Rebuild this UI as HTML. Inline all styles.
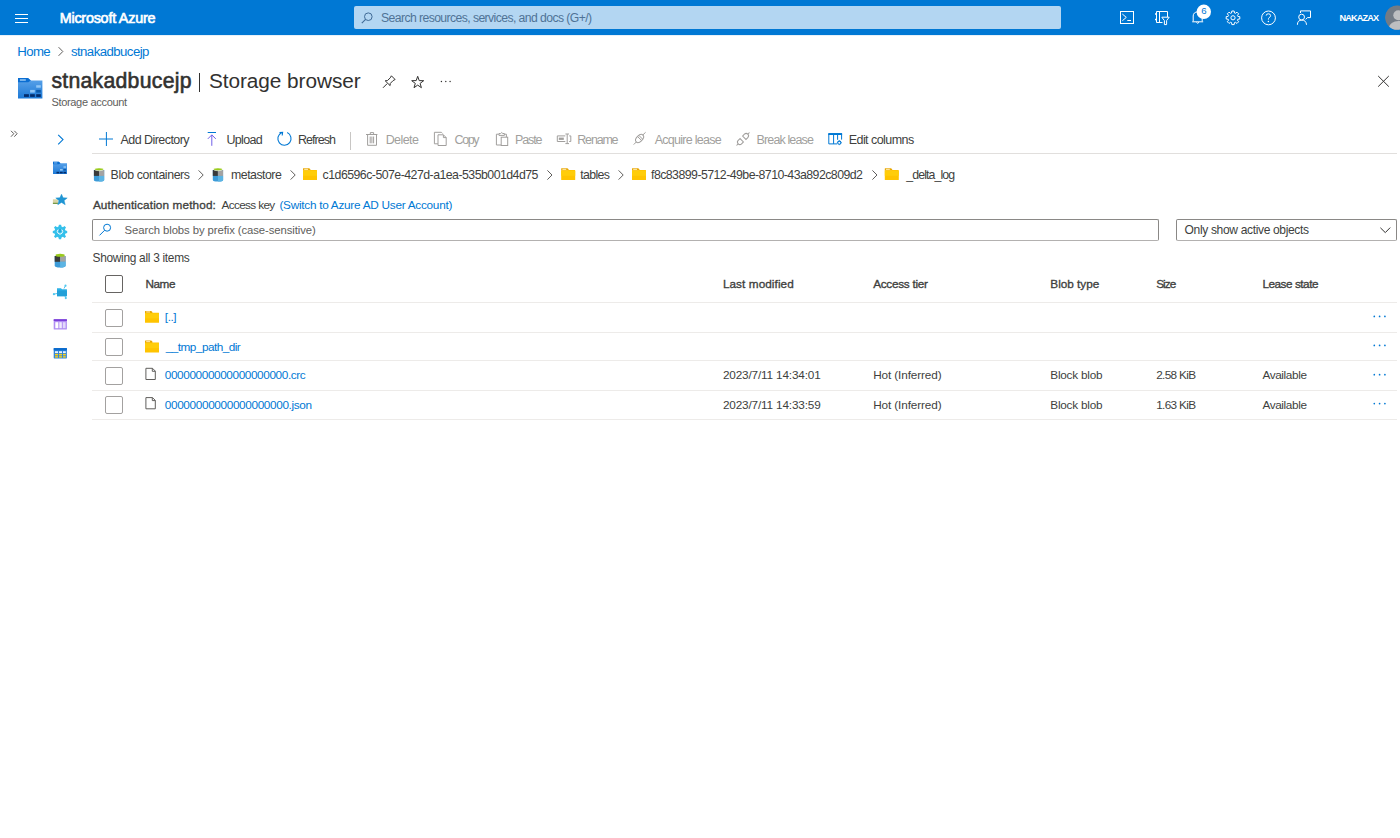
<!DOCTYPE html>
<html><head><meta charset="utf-8">
<style>
*{margin:0;padding:0;box-sizing:border-box}
html,body{width:1400px;height:838px;overflow:hidden;background:#fff;font-family:"Liberation Sans",sans-serif;position:relative}
.t{position:absolute;white-space:nowrap;line-height:1em}
.a{position:absolute}
svg{position:absolute;overflow:visible}
</style></head><body>
<!-- top bar -->
<div class="a" style="left:0;top:0;width:1400px;height:35px;background:#0078d4"></div>
<div class="a" style="left:354px;top:6px;width:707px;height:23px;background:#b3d6f2;border-radius:2px"></div>
<!-- hamburger -->
<div class="a" style="left:15px;top:13.5px;width:13px;height:1px;background:#fff"></div>
<div class="a" style="left:15px;top:17.5px;width:13px;height:1px;background:#fff"></div>
<div class="a" style="left:15px;top:21.5px;width:13px;height:1px;background:#fff"></div>
<!-- search icon -->
<svg style="left:361px;top:12px" width="12" height="12" viewBox="0 0 12 12"><circle cx="7.3" cy="4.7" r="3.8" fill="none" stroke="#3f6a96" stroke-width="1"/><path d="M4.6 7.4 L0.8 11.2" stroke="#3f6a96" stroke-width="1.1"/></svg>

<!-- ===== top bar icons ===== -->
<svg style="left:0;top:0" width="1400" height="35" viewBox="0 0 1400 35">
 <g fill="none" stroke="#fff" stroke-width="1">
  <!-- cloud shell -->
  <rect x="1120.5" y="11.5" width="13" height="12"/>
  <path d="M1122.3 14 L1126.3 17.4 L1122.3 20.8"/>
  <path d="M1127.3 20.5 H1131"/>
  <!-- directory + filter -->
  <path d="M1162.5 22.5 H1156.5 V11.5 H1167.5 V17"/>
  <path d="M1159.5 11.5 V22.5"/>
  <path d="M1155 14 H1157 M1155 19.5 H1157" stroke-width="1.3"/>
  <path d="M1161.8 17.2 H1169.2 L1166.6 20.6 V24.6 H1164.4 V20.6 Z"/>
  <!-- bell -->
  <path d="M1193.2 21.3 V16 Q1193.2 12.2 1197.8 11.8 Q1202 12.2 1202.2 16 V21.3"/>
  <path d="M1192.2 21.8 H1203.2"/>
  <path d="M1196.4 22.3 Q1197.7 24.3 1199 22.3"/>
  <!-- gear -->
  <circle cx="1233" cy="17.8" r="2.1"/>
  <!-- help -->
  <circle cx="1268.5" cy="17.9" r="6.9"/>
  <path d="M1266.2 15.6 Q1266.2 13.8 1268.4 13.8 Q1270.6 13.8 1270.6 15.6 Q1270.6 16.9 1269.2 17.6 Q1268.4 18.1 1268.4 19.6"/>
  <!-- feedback -->
  <path d="M1300.5 13 V10.9 H1310.5 V17.6 H1307.5 L1305.6 19.4"/>
  <circle cx="1301.6" cy="17.1" r="2.9"/>
  <path d="M1297.4 24.8 Q1297.4 20.1 1301.8 20.1 Q1306.2 20.1 1306.5 24.8"/>
 </g>
 <!-- gear teeth -->
 <path fill="none" stroke="#fff" stroke-width="1" stroke-linejoin="round" d="M1231.52 13.02 L1231.83 11.00 L1234.17 11.00 L1234.48 13.02 L1235.33 13.38 L1236.98 12.17 L1238.63 13.82 L1237.42 15.47 L1237.78 16.32 L1239.80 16.63 L1239.80 18.97 L1237.78 19.28 L1237.42 20.13 L1238.63 21.78 L1236.98 23.43 L1235.33 22.22 L1234.48 22.58 L1234.17 24.60 L1231.83 24.60 L1231.52 22.58 L1230.67 22.22 L1229.02 23.43 L1227.37 21.78 L1228.58 20.13 L1228.22 19.28 L1226.20 18.97 L1226.20 16.63 L1228.22 16.32 L1228.58 15.47 L1227.37 13.82 L1229.02 12.17 L1230.67 13.38 Z"/>
 <circle cx="1268.4" cy="21.4" r="0.75" fill="#fff"/>
 <!-- badge -->
 <circle cx="1203.8" cy="11.8" r="7.2" fill="#fff"/>
 <text x="1204" y="13.9" font-family="Liberation Sans" font-size="9.6" fill="#0078d4" text-anchor="middle">6</text>
 <!-- avatar -->
 <clipPath id="avc"><circle cx="1397.3" cy="17.45" r="12.3"/></clipPath>
 <g clip-path="url(#avc)">
 <circle cx="1397.3" cy="17.45" r="12.3" fill="#737b85"/>
 <circle cx="1398.3" cy="15.3" r="5" fill="#bebfc1"/>
 <ellipse cx="1398.5" cy="27.5" rx="9.5" ry="6.5" fill="#bebfc1"/>
 </g>
</svg>
<div class="a" style="left:0;top:35px;width:1400px;height:1px;background:#e6f0f9"></div>


<!-- ===== header area ===== -->
<svg style="left:0;top:36px" width="1400" height="80" viewBox="0 36 1400 80">
 <!-- breadcrumb chevron -->
 <path d="M58.6 47.2 L62.8 51.5 L58.6 55.8" fill="none" stroke="#605e5c" stroke-width="1"/>
 <!-- storage account icon -->
 <defs><linearGradient id="sg" x1="0" y1="0" x2="0" y2="1"><stop offset="0" stop-color="#5ea5ea"/><stop offset="1" stop-color="#1b78d6"/></linearGradient></defs>
 <path d="M18 78 H28 L30.8 80.4 H42.4 V98.6 H18 Z" fill="url(#sg)"/>
 <path d="M18 78 H28 L30.8 80.4 L28.3 82.3 H18 Z" fill="#0b6ed2"/>
 <rect x="19.9" y="79.2" width="5.9" height="1.6" fill="#8fc4f3"/>
 <rect x="36.2" y="85.2" width="4.6" height="2.5" fill="#91c6f6"/>
 <rect x="30.1" y="89.9" width="4.7" height="2.7" fill="#91c6f6"/>
 <rect x="36.2" y="89.9" width="4.6" height="2.7" fill="#0c5aab"/>
 <rect x="24" y="94.2" width="4.9" height="2.7" fill="#032c6b"/>
 <rect x="30.1" y="94.2" width="4.7" height="2.7" fill="#032c6b"/>
 <rect x="36.2" y="94.2" width="4.6" height="2.7" fill="#032c6b"/>
 <!-- pin -->
 <g fill="none" stroke="#323130" stroke-width="1" stroke-linejoin="round">
  <path d="M383 87.8 L387.2 83.6"/>
  <path d="M385.2 80.8 L387.4 80.6 L390.3 77.8 L391.4 75.8 L395.1 79.5 L393.1 80.6 L390.3 83.4 L390.1 85.6 Z"/>
  <!-- star -->
  <path d="M417.7 76.3 L419.2 80.6 L423.7 80.7 L420.1 83.4 L421.4 87.7 L417.7 85.1 L414 87.7 L415.3 83.4 L411.7 80.7 L416.2 80.6 Z"/>
  <!-- close -->
  <path d="M1378.2 76 L1388.8 86.6 M1388.8 76 L1378.2 86.6"/>
 </g>
 <g fill="#323130">
  <circle cx="441.4" cy="81.5" r="0.7"/><circle cx="445.8" cy="81.5" r="0.7"/><circle cx="450.1" cy="81.5" r="0.7"/>
 </g>
</svg>
<div class="a" style="left:199px;top:73px;width:1.4px;height:19px;background:#323130"></div>


<!-- ===== sidebar ===== -->
<svg style="left:0;top:120px" width="90" height="250" viewBox="0 120 90 250">
 <g fill="none" stroke="#605e5c" stroke-width="1">
  <path d="M11 130.8 L13.8 133.7 L11 136.7 M14.3 130.8 L17.1 133.7 L14.3 136.7"/>
 </g>
 <path d="M58.2 134.9 L63 139.6 L58.2 144.4" fill="none" stroke="#0078d4" stroke-width="1.1"/>
 <!-- storage icon small -->
 <defs><linearGradient id="sg2" x1="0" y1="0" x2="0" y2="1"><stop offset="0" stop-color="#5ea5ea"/><stop offset="1" stop-color="#1b78d6"/></linearGradient></defs>
 <path d="M53 161.8 H58.8 L60.5 163.2 H67 V174.1 H53 Z" fill="url(#sg2)"/>
 <path d="M53 161.8 H58.8 L60.5 163.2 L59 164.3 H53 Z" fill="#0b6ed2"/>
 <rect x="54" y="162.5" width="3.3" height="0.9" fill="#8fc4f3"/>
 <rect x="63.5" y="166.3" width="2.6" height="1.5" fill="#91c6f6"/>
 <rect x="60" y="169" width="2.7" height="1.6" fill="#91c6f6"/>
 <rect x="63.5" y="169" width="2.6" height="1.6" fill="#0c5aab"/>
 <rect x="56.5" y="171.8" width="2.8" height="1.6" fill="#032c6b"/>
 <rect x="60" y="171.8" width="2.7" height="1.6" fill="#032c6b"/>
 <rect x="63.5" y="171.8" width="2.6" height="1.6" fill="#032c6b"/>
 <!-- drawer + star -->
 <rect x="52.9" y="199.3" width="5" height="4.5" fill="#d9d4a6"/>
 <rect x="52.9" y="202.8" width="5" height="1" fill="#5d8b2f"/>
 <path d="M61.5 194.2 L63.1 197.8 L67.2 198 L64.1 200.6 L65.2 204.7 L61.5 202.4 L57.8 204.7 L58.9 200.6 L55.8 198 L59.9 197.8 Z" fill="#1f95d3" stroke="#1f95d3" stroke-width="0.5" stroke-linejoin="round"/>
 <!-- gear cyan -->
 <path fill="#34c0eb" d="M58.9 224.7 H61.1 L61.5 226.6 L62.9 227.2 L64.5 226.1 L66 227.6 L64.9 229.2 L65.5 230.6 L67.2 231 V233 L65.5 233.4 L64.9 234.8 L66 236.4 L64.5 237.9 L62.9 236.8 L61.5 237.4 L61.1 239.2 H58.9 L58.5 237.4 L57.1 236.8 L55.5 237.9 L54 236.4 L55.1 234.8 L54.5 233.4 L52.8 233 V231 L54.5 230.6 L55.1 229.2 L54 227.6 L55.5 226.1 L57.1 227.2 L58.5 226.6 Z"/>
 <path d="M61.8 229.6 A2.6 2.6 0 1 1 58.2 229.6" fill="none" stroke="#fff" stroke-width="1"/>
 <path d="M60 229 V232" stroke="#1e90c8" stroke-width="1"/>
 <!-- container -->
 <path d="M54.7 256 H65.6 V265.6 Q65.6 267.6 60.15 267.6 Q54.7 267.6 54.7 265.6 Z" fill="#3c9bd8"/>
 <rect x="54.7" y="256" width="5.4" height="5.8" fill="#3a3a3a"/>
 <rect x="60.1" y="256" width="5.5" height="5.8" fill="#a3a3a3"/>
 <path d="M60.1 261.8 H65.6 V265.6 Q65.6 267.6 60.15 267.6 Z" fill="#5cb4e3"/>
 <ellipse cx="60.15" cy="255.2" rx="4.6" ry="1.5" fill="#9acb1c"/>
 <!-- share/fileshare -->
 <path d="M57 288.3 H61 L62 289.2 H66.9 V296.2 H57 Z" fill="#2cb1e6"/>
 <rect x="57" y="290.5" width="9.9" height="5.7" fill="#22a0d8"/>
 <path d="M54 294.2 L57 293.5 M65.5 285.7 L64 288.5 M65.8 298.1 L65 296" stroke="#2cb1e6" stroke-width="0.8"/>
 <circle cx="53.9" cy="294.2" r="1.1" fill="#50c8f0"/>
 <circle cx="65.5" cy="285.7" r="1.1" fill="#50c8f0"/>
 <circle cx="65.8" cy="298.1" r="1.1" fill="#50c8f0"/>
 <!-- queue purple -->
 <rect x="53.7" y="319.2" width="13.2" height="10.3" rx="0.6" fill="#b08ef2"/>
 <rect x="53.7" y="319.2" width="13.2" height="1.8" fill="#7a3ed8"/>
 <rect x="55.3" y="322.2" width="3" height="6" fill="#fff"/>
 <rect x="59.3" y="322.2" width="2.5" height="6" fill="#f0ebfd"/>
 <rect x="62.8" y="322.2" width="2.8" height="6" fill="#e2d8fb"/>
 <!-- table -->
 <rect x="53.7" y="348.1" width="13.2" height="10.3" rx="0.6" fill="#2f86dc"/>
 <rect x="53.7" y="348.1" width="13.2" height="2.3" fill="#0a6bcc"/>
 <g fill="#ffffff"><rect x="55" y="351.3" width="3" height="1.6"/><rect x="59" y="351.3" width="3" height="1.6"/><rect x="63" y="351.3" width="2.8" height="1.6"/></g>
 <g fill="#fcd116"><rect x="55" y="353.8" width="3" height="1.6"/><rect x="59" y="353.8" width="3" height="1.6"/><rect x="63" y="353.8" width="2.8" height="1.6"/>
 <rect x="55" y="356.2" width="3" height="1.4"/><rect x="59" y="356.2" width="3" height="1.4"/><rect x="63" y="356.2" width="2.8" height="1.4"/></g>
</svg>


<!-- ===== toolbar icons ===== -->
<svg style="left:90px;top:125px" width="860" height="30" viewBox="90 125 860 30">
 <g fill="none" stroke-width="1">
  <!-- plus -->
  <path d="M106.4 132 V146 M99 139 H113" stroke="#0078d4"/>
  <!-- upload -->
  <path d="M207.7 132.5 H216" stroke="#0078d4"/>
  <path d="M211.8 134.8 V145.8 M207.8 138.9 L211.8 134.9 L215.8 138.9" stroke="#7160e8"/>
  <!-- refresh -->
  <path d="M287.2 132.6 A6.6 6.6 0 1 1 281.5 132.7" stroke="#0078d4" stroke-width="1.1"/>
  <path d="M279.5 132.6 L282.6 132.4 L282.2 135.5" stroke="#0078d4" stroke-width="1.1"/>
  <!-- trash -->
  <g stroke="#a19f9d">
   <path d="M366 134.5 H377.4"/>
   <path d="M370.3 134.5 V132.6 H373.6 V134.5"/>
   <path d="M367.6 134.5 V145.3 H376.5 V134.5"/>
   <path d="M370.2 136.5 V143.3 M371.9 136.5 V143.3 M373.6 136.5 V143.3"/>
  </g>
  <!-- copy -->
  <g stroke="#a19f9d">
   <path d="M437.9 143.8 H434.4 V132.3 H441.4 L442.6 133.5"/>
   <path d="M438 134.8 H443.4 L446.2 137.6 V145.5 H438 Z"/>
   <path d="M443.4 134.8 V137.6 H446.2"/>
  </g>
  <!-- paste -->
  <g stroke="#a19f9d">
   <path d="M501 145 H496.4 V134.2 H498.8"/>
   <path d="M504.6 134.2 H506.4 V137"/>
   <path d="M499 135.4 V133.5 H500.6 Q501.7 131.6 502.8 133.5 H504.4 V135.4 Z"/>
   <rect x="501.2" y="137.2" width="6.5" height="8.3"/>
  </g>
  <!-- rename -->
  <g stroke="#a19f9d">
   <path d="M565.3 135.9 H557.3 V141.5 H565.3"/>
   <path d="M569.2 135.9 H570.8 V141.5 H569.2"/>
   <path d="M567.2 134 V143.6 M565.4 134 H569 M565.4 143.6 H569"/>
  </g>
  <rect x="558.8" y="137.6" width="5" height="2.3" fill="#a19f9d"/>
  <!-- acquire lease -->
  <g stroke="#a19f9d">
   <path d="M633.7 144.6 L636.4 141.9 M642.8 135 L645.6 132.3"/>
   <ellipse cx="639.6" cy="138.5" rx="4.8" ry="2.9" transform="rotate(-45 639.6 138.5)"/>
   <path d="M637.6 136.6 L641.5 140.4 M638.9 135.4 L642.7 139.2"/>
  </g>
  <!-- break lease -->
  <g stroke="#a19f9d" transform="rotate(-45 743 139)">
   <path d="M733.8 139 H736.2"/>
   <path d="M741.2 136.6 H738.6 A2.4 2.4 0 0 0 738.6 141.4 H741.2 Z"/>
   <path d="M744.8 136.6 H747.4 A2.4 2.4 0 0 1 747.4 141.4 H744.8 Z"/>
   <path d="M749.8 139 H752.2"/>
  </g>
  <!-- edit columns -->
  <g stroke="#0078d4">
   <path d="M837 143.9 H828.8 V133.8 H841.6 V139.6"/>
   <path d="M833.6 135 V143.9 M837.6 135 V139.8"/>
  </g>
  <rect x="828.3" y="133.1" width="13.8" height="1.9" fill="#0078d4"/>
  <circle cx="839.3" cy="142.7" r="1.6" fill="#fff" stroke="#0078d4" stroke-width="1.1"/>
  <path d="M839.3 140.3 V140.9 M839.3 144.5 V145.1 M836.9 142.7 H837.5 M841.1 142.7 H841.7" stroke="#0078d4" stroke-width="1"/>
 </g>
</svg>

<svg style="left:85px;top:160px" width="900" height="30" viewBox="85 160 900 30">
<g transform="translate(93.9 167.9)">
  <path d="M0 2.2 H10.3 V12 Q10.3 13.7 5.15 13.7 Q0 13.7 0 12 Z" fill="#3c9bd8"/>
  <rect x="0" y="2.2" width="5.1" height="5.8" fill="#3a3a3a"/>
  <rect x="5.1" y="2.2" width="5.2" height="5.8" fill="#a3a3a3"/>
  <path d="M5.1 8 H10.3 V12 Q10.3 13.7 5.15 13.7 Z" fill="#5cb4e3"/>
  <ellipse cx="5.15" cy="1.4" rx="4.4" ry="1.4" fill="#9acb1c" stroke="#fff" stroke-width="0.6"/>
 </g>
<g transform="translate(212.8 167.9)">
  <path d="M0 2.2 H10.3 V12 Q10.3 13.7 5.15 13.7 Q0 13.7 0 12 Z" fill="#3c9bd8"/>
  <rect x="0" y="2.2" width="5.1" height="5.8" fill="#3a3a3a"/>
  <rect x="5.1" y="2.2" width="5.2" height="5.8" fill="#a3a3a3"/>
  <path d="M5.1 8 H10.3 V12 Q10.3 13.7 5.15 13.7 Z" fill="#5cb4e3"/>
  <ellipse cx="5.15" cy="1.4" rx="4.4" ry="1.4" fill="#9acb1c" stroke="#fff" stroke-width="0.6"/>
 </g>
<path d="M198.6 170.4 L203.2 175.0 L198.6 179.6" fill="none" stroke="#605e5c" stroke-width="1"/>
<path d="M290.6 170.4 L295.20000000000005 175.0 L290.6 179.6" fill="none" stroke="#605e5c" stroke-width="1"/>
<path d="M547.4 170.4 L552.0 175.0 L547.4 179.6" fill="none" stroke="#605e5c" stroke-width="1"/>
<path d="M618.6 170.4 L623.2 175.0 L618.6 179.6" fill="none" stroke="#605e5c" stroke-width="1"/>
<path d="M872.4 170.4 L877.0 175.0 L872.4 179.6" fill="none" stroke="#605e5c" stroke-width="1"/>
<g transform="translate(303 168.3)">
  <path d="M0 0.3 Q0 0 0.3 0 H6.2 L7.4 1 V2.3 H0 Z" fill="#e8a702"/>
  <path d="M0 2 H6.4 L7.5 1.8 H13.7 Q14 1.8 14 2.1 V11.5 Q14 11.8 13.7 11.8 H0.3 Q0 11.8 0 11.5 Z" fill="#ffc400"/>
  <rect x="0" y="2.6" width="14" height="4.9" fill="#ffcd0a"/>
  <rect x="1.2" y="0.5" width="3.8" height="1.1" fill="#fde7a8"/>
 </g>
<g transform="translate(561.2 168.3)">
  <path d="M0 0.3 Q0 0 0.3 0 H6.2 L7.4 1 V2.3 H0 Z" fill="#e8a702"/>
  <path d="M0 2 H6.4 L7.5 1.8 H13.7 Q14 1.8 14 2.1 V11.5 Q14 11.8 13.7 11.8 H0.3 Q0 11.8 0 11.5 Z" fill="#ffc400"/>
  <rect x="0" y="2.6" width="14" height="4.9" fill="#ffcd0a"/>
  <rect x="1.2" y="0.5" width="3.8" height="1.1" fill="#fde7a8"/>
 </g>
<g transform="translate(632 168.3)">
  <path d="M0 0.3 Q0 0 0.3 0 H6.2 L7.4 1 V2.3 H0 Z" fill="#e8a702"/>
  <path d="M0 2 H6.4 L7.5 1.8 H13.7 Q14 1.8 14 2.1 V11.5 Q14 11.8 13.7 11.8 H0.3 Q0 11.8 0 11.5 Z" fill="#ffc400"/>
  <rect x="0" y="2.6" width="14" height="4.9" fill="#ffcd0a"/>
  <rect x="1.2" y="0.5" width="3.8" height="1.1" fill="#fde7a8"/>
 </g>
<g transform="translate(884.8 168.3)">
  <path d="M0 0.3 Q0 0 0.3 0 H6.2 L7.4 1 V2.3 H0 Z" fill="#e8a702"/>
  <path d="M0 2 H6.4 L7.5 1.8 H13.7 Q14 1.8 14 2.1 V11.5 Q14 11.8 13.7 11.8 H0.3 Q0 11.8 0 11.5 Z" fill="#ffc400"/>
  <rect x="0" y="2.6" width="14" height="4.9" fill="#ffcd0a"/>
  <rect x="1.2" y="0.5" width="3.8" height="1.1" fill="#fde7a8"/>
 </g>
</svg>
<svg style="left:85px;top:215px" width="1315" height="210" viewBox="85 215 1315 210">
<circle cx="107.1" cy="227.7" r="3.5" fill="none" stroke="#0078d4" stroke-width="1"/>
<path d="M104.6 230.3 L99.5 235.4" stroke="#0078d4" stroke-width="1"/>
<path d="M1380.4 227.8 L1385.3 232.6 L1390.2 227.6" fill="none" stroke="#323130" stroke-width="1"/>
<g transform="translate(145 310.9)">
  <path d="M0 0.3 Q0 0 0.3 0 H6.2 L7.4 1 V2.3 H0 Z" fill="#e8a702"/>
  <path d="M0 2 H6.4 L7.5 1.8 H13.7 Q14 1.8 14 2.1 V11.6 Q14 11.9 13.7 11.9 H0.3 Q0 11.9 0 11.6 Z" fill="#ffc400"/>
  <rect x="0" y="2.6" width="14" height="4.95" fill="#ffcd0a"/>
  <rect x="1.2" y="0.5" width="3.8" height="1.1" fill="#fde7a8"/>
 </g>
<g transform="translate(145 340.6)">
  <path d="M0 0.3 Q0 0 0.3 0 H6.2 L7.4 1 V2.3 H0 Z" fill="#e8a702"/>
  <path d="M0 2 H6.4 L7.5 1.8 H13.7 Q14 1.8 14 2.1 V11.7 Q14 12 13.7 12 H0.3 Q0 12 0 11.7 Z" fill="#ffc400"/>
  <rect x="0" y="2.6" width="14" height="5.0" fill="#ffcd0a"/>
  <rect x="1.2" y="0.5" width="3.8" height="1.1" fill="#fde7a8"/>
 </g>
<path d="M145.9 368.3 H152.5 L155.3 371.1 V379.5 H145.9 Z" fill="#fff" stroke="#605e5c" stroke-width="1"/>
<path d="M152.3 368.3 V371.3 H155.3" fill="none" stroke="#605e5c" stroke-width="1"/>
<path d="M145.9 397.6 H152.5 L155.3 400.40000000000003 V408.8 H145.9 Z" fill="#fff" stroke="#605e5c" stroke-width="1"/>
<path d="M152.3 397.6 V400.6 H155.3" fill="none" stroke="#605e5c" stroke-width="1"/>
<circle cx="1374.3" cy="316.4" r="0.85" fill="#0078d4"/>
<circle cx="1379.6" cy="316.4" r="0.85" fill="#0078d4"/>
<circle cx="1384.9" cy="316.4" r="0.85" fill="#0078d4"/>
<circle cx="1374.3" cy="345.4" r="0.85" fill="#0078d4"/>
<circle cx="1379.6" cy="345.4" r="0.85" fill="#0078d4"/>
<circle cx="1384.9" cy="345.4" r="0.85" fill="#0078d4"/>
<circle cx="1374.3" cy="374.7" r="0.85" fill="#0078d4"/>
<circle cx="1379.6" cy="374.7" r="0.85" fill="#0078d4"/>
<circle cx="1384.9" cy="374.7" r="0.85" fill="#0078d4"/>
<circle cx="1374.3" cy="403.6" r="0.85" fill="#0078d4"/>
<circle cx="1379.6" cy="403.6" r="0.85" fill="#0078d4"/>
<circle cx="1384.9" cy="403.6" r="0.85" fill="#0078d4"/>
</svg>
<!-- table borders -->
<div class="a" style="left:92px;top:153px;width:1305px;height:1px;background:#e1dfdd"></div>
<div class="a" style="left:92px;top:302px;width:1305px;height:1px;background:#edebe9"></div>
<div class="a" style="left:92px;top:332px;width:1305px;height:1px;background:#edebe9"></div>
<div class="a" style="left:92px;top:360px;width:1305px;height:1px;background:#edebe9"></div>
<div class="a" style="left:92px;top:390px;width:1305px;height:1px;background:#edebe9"></div>
<div class="a" style="left:92px;top:419px;width:1305px;height:1px;background:#edebe9"></div>
<!-- toolbar separator -->
<div class="a" style="left:350px;top:132px;width:1px;height:18px;background:#c8c6c4"></div>
<!-- search box and dropdown -->
<div class="a" style="left:92px;top:219px;width:1067px;height:22px;border:1px solid #8a8886;border-bottom-color:#b3b1b0;border-radius:2px"></div>
<div class="a" style="left:1176px;top:219px;width:221px;height:22px;border:1px solid #8a8886;border-bottom-color:#b3b1b0;border-radius:2px"></div>
<!-- checkboxes -->
<div class="a" style="left:105px;top:275px;width:18px;height:18px;border:1px solid #666462;border-radius:2px"></div>
<div class="a" style="left:105px;top:309px;width:18px;height:18px;border:1px solid #a3a1a0;border-radius:2px"></div>
<div class="a" style="left:105px;top:338px;width:18px;height:18px;border:1px solid #a3a1a0;border-radius:2px"></div>
<div class="a" style="left:105px;top:367px;width:18px;height:18px;border:1px solid #a3a1a0;border-radius:2px"></div>
<div class="a" style="left:105px;top:396px;width:18px;height:18px;border:1px solid #a3a1a0;border-radius:2px"></div>
<span class="t" style="left:59.70px;top:10.82px;font-size:14.39px;font-weight:400;color:#ffffff;letter-spacing:-0.233px;-webkit-text-stroke:0.65px #ffffff">Microsoft Azure</span>
<span class="t" style="left:381.00px;top:11.66px;font-size:12.21px;font-weight:400;color:#4f7396;letter-spacing:-0.584px">Search resources, services, and docs (G+/)</span>
<span class="t" style="left:1339.40px;top:13.85px;font-size:9.16px;font-weight:700;color:#ffffff;letter-spacing:-0.831px">NAKAZAX</span>
<span class="t" style="left:17.30px;top:44.80px;font-size:13.23px;font-weight:400;color:#0078d4;letter-spacing:-0.636px">Home</span>
<span class="t" style="left:70.90px;top:44.80px;font-size:13.23px;font-weight:400;color:#0078d4;letter-spacing:-0.558px">stnakadbucejp</span>
<span class="t" style="left:51.40px;top:69.94px;font-size:21.22px;font-weight:400;color:#323130;letter-spacing:0.271px;-webkit-text-stroke:0.59px #323130">stnakadbucejp</span>
<span class="t" style="left:208.90px;top:70.81px;font-size:20.79px;font-weight:400;color:#323130;letter-spacing:-0.046px">Storage browser</span>
<span class="t" style="left:51.40px;top:97.15px;font-size:11.05px;font-weight:400;color:#605e5c;letter-spacing:-0.334px">Storage account</span>
<span class="t" style="left:120.60px;top:134.22px;font-size:12.50px;font-weight:400;color:#403f3e;letter-spacing:-0.564px">Add Directory</span>
<span class="t" style="left:226.50px;top:134.22px;font-size:12.50px;font-weight:400;color:#403f3e;letter-spacing:-0.692px">Upload</span>
<span class="t" style="left:298.00px;top:134.22px;font-size:12.50px;font-weight:400;color:#403f3e;letter-spacing:-0.969px">Refresh</span>
<span class="t" style="left:385.70px;top:134.22px;font-size:12.50px;font-weight:400;color:#a19f9d;letter-spacing:-0.596px">Delete</span>
<span class="t" style="left:454.60px;top:134.22px;font-size:12.50px;font-weight:400;color:#a19f9d;letter-spacing:-1.410px">Copy</span>
<span class="t" style="left:515.00px;top:134.22px;font-size:12.50px;font-weight:400;color:#a19f9d;letter-spacing:-1.128px">Paste</span>
<span class="t" style="left:577.30px;top:134.22px;font-size:12.50px;font-weight:400;color:#a19f9d;letter-spacing:-1.199px">Rename</span>
<span class="t" style="left:654.70px;top:134.22px;font-size:12.50px;font-weight:400;color:#a19f9d;letter-spacing:-0.724px">Acquire lease</span>
<span class="t" style="left:756.60px;top:134.22px;font-size:12.50px;font-weight:400;color:#a19f9d;letter-spacing:-0.876px">Break lease</span>
<span class="t" style="left:848.70px;top:134.22px;font-size:12.50px;font-weight:400;color:#403f3e;letter-spacing:-0.546px">Edit columns</span>
<span class="t" style="left:110.60px;top:168.64px;font-size:12.35px;font-weight:400;color:#403f3e;letter-spacing:-0.408px">Blob containers</span>
<span class="t" style="left:231.10px;top:168.64px;font-size:12.35px;font-weight:400;color:#403f3e;letter-spacing:-0.527px">metastore</span>
<span class="t" style="left:322.60px;top:168.64px;font-size:12.35px;font-weight:400;color:#403f3e;letter-spacing:-0.539px">c1d6596c-507e-427d-a1ea-535b001d4d75</span>
<span class="t" style="left:580.30px;top:168.64px;font-size:12.35px;font-weight:400;color:#403f3e;letter-spacing:-0.673px">tables</span>
<span class="t" style="left:651.00px;top:168.64px;font-size:12.35px;font-weight:400;color:#403f3e;letter-spacing:-0.552px">f8c83899-5712-49be-8710-43a892c809d2</span>
<span class="t" style="left:906.30px;top:168.64px;font-size:12.35px;font-weight:400;color:#403f3e;letter-spacing:-0.900px">_delta_log</span>
<span class="t" style="left:92.90px;top:198.83px;font-size:11.77px;font-weight:400;color:#403f3e;letter-spacing:0.125px;-webkit-text-stroke:0.33px #403f3e">Authentication method:</span>
<span class="t" style="left:221.50px;top:198.83px;font-size:11.77px;font-weight:400;color:#403f3e;letter-spacing:-0.646px">Access key</span>
<span class="t" style="left:279.40px;top:198.83px;font-size:11.77px;font-weight:400;color:#0078d4;letter-spacing:-0.255px">(Switch to Azure AD User Account)</span>
<span class="t" style="left:124.60px;top:224.60px;font-size:11.34px;font-weight:400;color:#605e5c;letter-spacing:-0.089px">Search blobs by prefix (case-sensitive)</span>
<span class="t" style="left:1184.60px;top:223.79px;font-size:12.06px;font-weight:400;color:#403f3e;letter-spacing:-0.354px">Only show active objects</span>
<span class="t" style="left:92.50px;top:252.51px;font-size:11.92px;font-weight:400;color:#403f3e;letter-spacing:-0.296px">Showing all 3 items</span>
<span class="t" style="left:145.40px;top:277.93px;font-size:11.77px;font-weight:400;color:#403f3e;letter-spacing:-0.447px;-webkit-text-stroke:0.33px #403f3e">Name</span>
<span class="t" style="left:722.90px;top:277.93px;font-size:11.77px;font-weight:400;color:#403f3e;letter-spacing:0.072px;-webkit-text-stroke:0.33px #403f3e">Last modified</span>
<span class="t" style="left:873.20px;top:277.93px;font-size:11.77px;font-weight:400;color:#403f3e;letter-spacing:-0.282px;-webkit-text-stroke:0.33px #403f3e">Access tier</span>
<span class="t" style="left:1050.30px;top:277.93px;font-size:11.77px;font-weight:400;color:#403f3e;letter-spacing:-0.014px;-webkit-text-stroke:0.33px #403f3e">Blob type</span>
<span class="t" style="left:1156.20px;top:277.93px;font-size:11.77px;font-weight:400;color:#403f3e;letter-spacing:-0.915px;-webkit-text-stroke:0.33px #403f3e">Size</span>
<span class="t" style="left:1262.40px;top:277.93px;font-size:11.77px;font-weight:400;color:#403f3e;letter-spacing:-0.469px;-webkit-text-stroke:0.33px #403f3e">Lease state</span>
<span class="t" style="left:164.80px;top:311.03px;font-size:11.77px;font-weight:400;color:#0078d4;letter-spacing:-0.436px">[..]</span>
<span class="t" style="left:165.80px;top:340.73px;font-size:11.77px;font-weight:400;color:#0078d4;letter-spacing:-0.526px">__tmp_path_dir</span>
<span class="t" style="left:164.80px;top:369.23px;font-size:11.77px;font-weight:400;color:#0078d4;letter-spacing:-0.389px">00000000000000000000.crc</span>
<span class="t" style="left:164.80px;top:398.63px;font-size:11.77px;font-weight:400;color:#0078d4;letter-spacing:-0.353px">00000000000000000000.json</span>
<span class="t" style="left:722.90px;top:369.23px;font-size:11.77px;font-weight:400;color:#403f3e;letter-spacing:-0.158px">2023/7/11 14:34:01</span>
<span class="t" style="left:873.20px;top:369.23px;font-size:11.77px;font-weight:400;color:#403f3e;letter-spacing:-0.119px">Hot (Inferred)</span>
<span class="t" style="left:1050.30px;top:369.23px;font-size:11.77px;font-weight:400;color:#403f3e;letter-spacing:-0.227px">Block blob</span>
<span class="t" style="left:1156.20px;top:369.23px;font-size:11.77px;font-weight:400;color:#403f3e;letter-spacing:-0.661px">2.58 KiB</span>
<span class="t" style="left:1262.40px;top:369.23px;font-size:11.77px;font-weight:400;color:#403f3e;letter-spacing:-0.374px">Available</span>
<span class="t" style="left:722.90px;top:398.63px;font-size:11.77px;font-weight:400;color:#403f3e;letter-spacing:-0.158px">2023/7/11 14:33:59</span>
<span class="t" style="left:873.20px;top:398.63px;font-size:11.77px;font-weight:400;color:#403f3e;letter-spacing:-0.119px">Hot (Inferred)</span>
<span class="t" style="left:1050.30px;top:398.63px;font-size:11.77px;font-weight:400;color:#403f3e;letter-spacing:-0.227px">Block blob</span>
<span class="t" style="left:1156.20px;top:398.63px;font-size:11.77px;font-weight:400;color:#403f3e;letter-spacing:-0.661px">1.63 KiB</span>
<span class="t" style="left:1262.40px;top:398.63px;font-size:11.77px;font-weight:400;color:#403f3e;letter-spacing:-0.374px">Available</span>
</body></html>
